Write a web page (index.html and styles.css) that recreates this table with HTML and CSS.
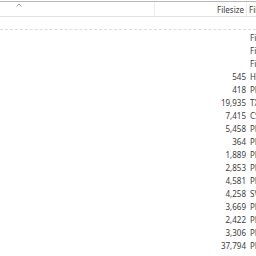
FILE: index.html
```html
<!DOCTYPE html>
<html>
<head>
<meta charset="utf-8">
<link rel="stylesheet" href="styles.css">
</head>
<body>
<div class="list">
  <div class="header">
    <div class="hcell name"><svg class="caret" width="6" height="4" viewBox="0 0 6 4"><path d="M0.5 3.5 L3 1 L5.5 3.5" fill="none" stroke="#a0a0a0" stroke-width="1"/></svg></div>
    <div class="hcell size">Filesize</div>
    <div class="hcell type">Filetype</div>
  </div>
  <div class="spacer"></div>
  <div class="rows">
    <div class="row"><span class="size"></span><span class="type">File folder</span></div>
    <div class="row"><span class="size"></span><span class="type">File folder</span></div>
    <div class="row"><span class="size"></span><span class="type">File folder</span></div>
    <div class="row"><span class="size">545</span><span class="type">HTML Document</span></div>
    <div class="row"><span class="size">418</span><span class="type">PNG File</span></div>
    <div class="row"><span class="size">19,935</span><span class="type">TXT File</span></div>
    <div class="row"><span class="size">7,415</span><span class="type">CSS File</span></div>
    <div class="row"><span class="size">5,458</span><span class="type">PNG File</span></div>
    <div class="row"><span class="size">364</span><span class="type">PNG File</span></div>
    <div class="row"><span class="size">1,889</span><span class="type">PNG File</span></div>
    <div class="row"><span class="size">2,853</span><span class="type">PNG File</span></div>
    <div class="row"><span class="size">4,581</span><span class="type">PNG File</span></div>
    <div class="row"><span class="size">4,258</span><span class="type">SVG File</span></div>
    <div class="row"><span class="size">3,669</span><span class="type">PNG File</span></div>
    <div class="row"><span class="size">2,422</span><span class="type">PNG File</span></div>
    <div class="row"><span class="size">3,306</span><span class="type">PNG File</span></div>
    <div class="row"><span class="size">37,794</span><span class="type">PNG File</span></div>
  </div>
</div>
</body>
</html>
```

FILE: styles.css
```css
html, body {
  margin: 0;
  padding: 0;
  background: #ffffff;
  width: 256px;
  height: 256px;
  overflow: hidden;
}
.list {
  width: 256px;
  font-family: "Noto Sans", "Open Sans", sans-serif;
  font-size: 8px;
  color: #3c3c3c;
  padding-top: 1px;
}
.header {
  display: grid;
  grid-template-columns: 155px 92px 1fr;
  height: 14px;
  border-top: 1px solid #b8b8b8;
  border-bottom: 1px solid #e2e2e2;
}
.hcell {
  display: flex;
  align-items: center;
  overflow: hidden;
  white-space: nowrap;
}
.hcell.name {
  border-right: 1px solid #ececec;
  position: relative;
}
.caret {
  position: absolute;
  left: 16px;
  top: 1px;
}
.hcell.size {
  justify-content: flex-end;
  padding-right: 2px;
  border-right: 1px solid #ececec;
}
.hcell.type {
  padding-left: 2px;
}
.spacer {
  height: 12px;
  border-bottom: 1px dashed #dcdcdc;
}
.rows {
  padding-top: 1px;
}
.row {
  display: grid;
  grid-template-columns: 155px 91px 1fr;
  height: 13px;
  align-items: center;
  white-space: nowrap;
  overflow: hidden;
}
.row .size {
  grid-column: 2;
  text-align: right;
}
.row .type {
  grid-column: 3;
  padding-left: 4px;
  overflow: hidden;
}
```
